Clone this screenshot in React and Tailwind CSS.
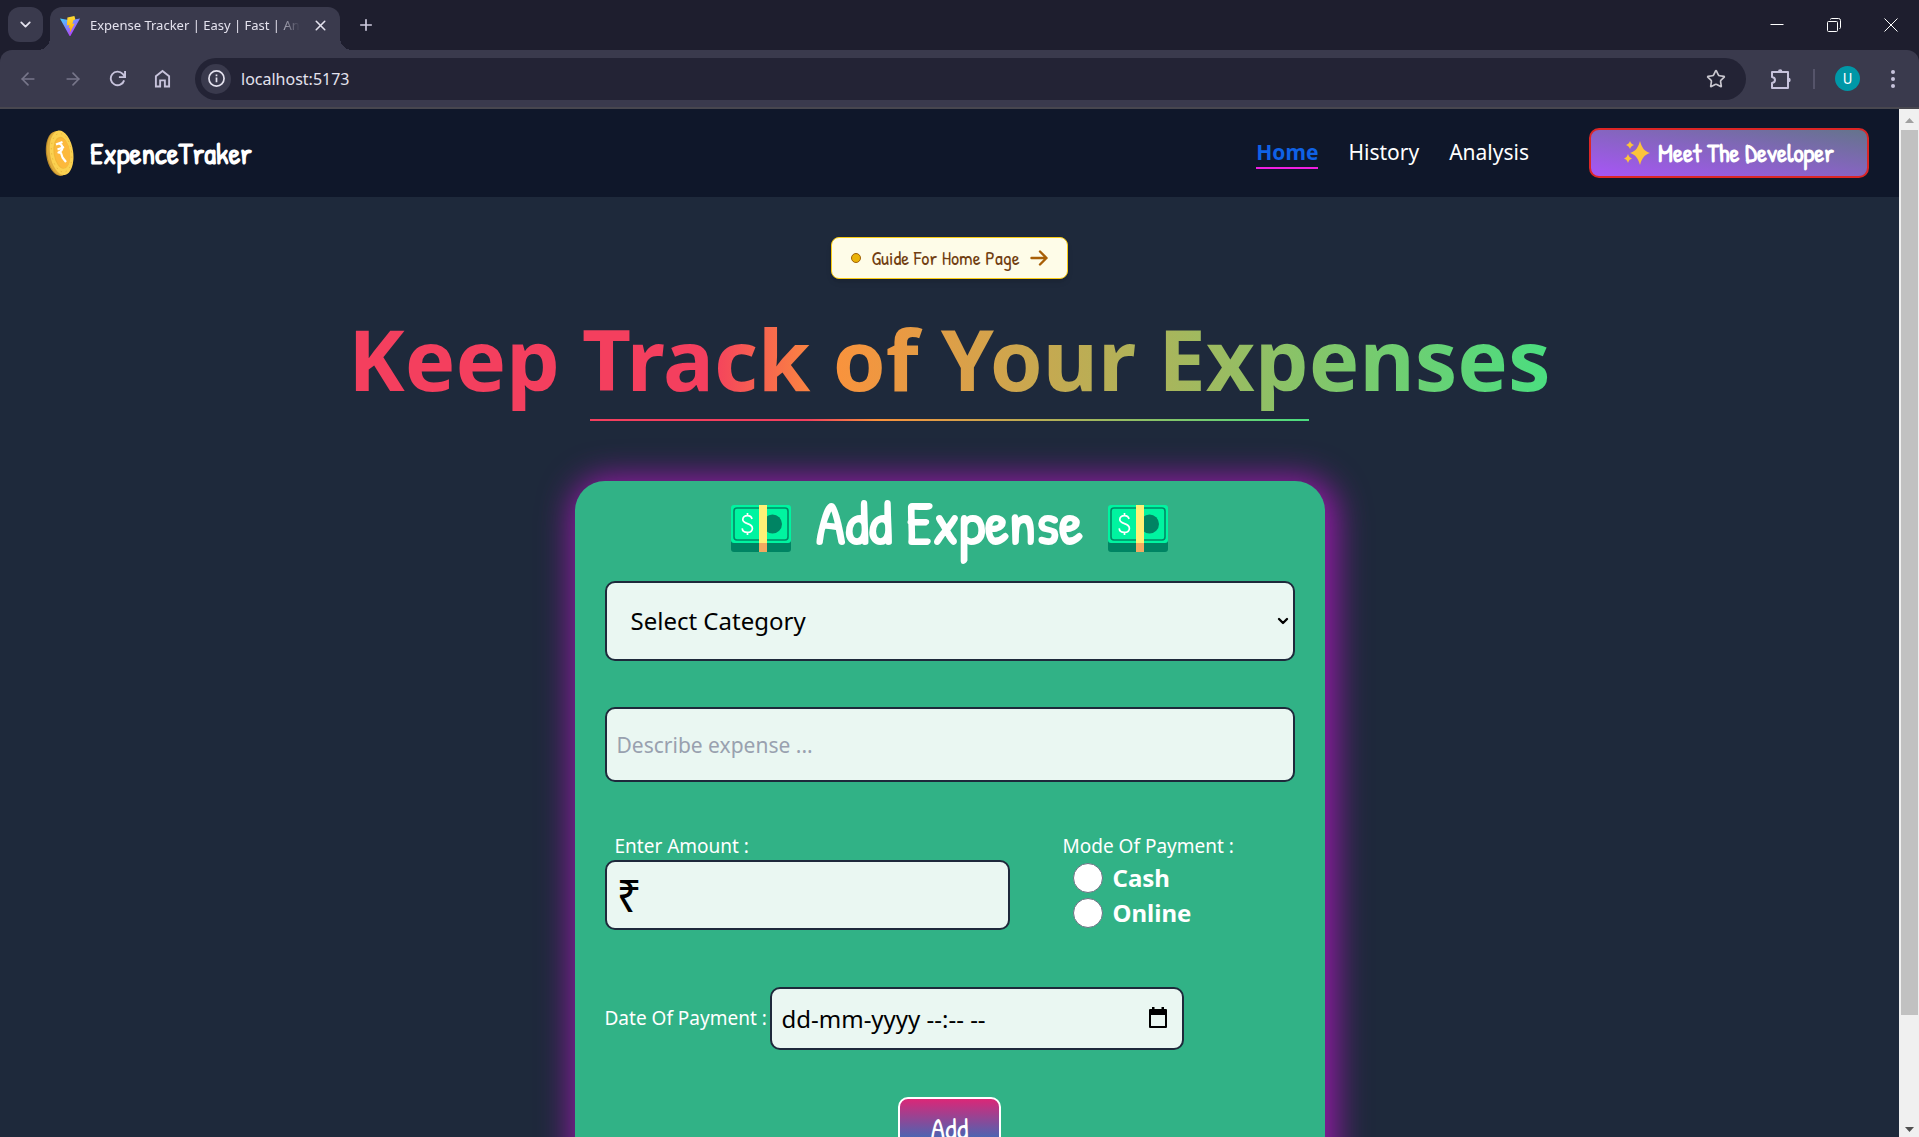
import React from "react";
import { ArrowLeft, ArrowRight, ChevronDown, Plus, X, Star } from "lucide-react";

const hand = "font-['Patrick_Hand','Liberation_Sans_Narrow',sans-serif]";
const field = "rounded-[10px] border-2 border-[#1e293b] bg-[#eaf7f2]";

function ViteLogo() {
  return (
    <svg viewBox="0 0 20 20" className="size-5 shrink-0" aria-hidden="true">
      <defs>
        <linearGradient id="vite-a" x1="0" y1="0" x2="0.7" y2="1">
          <stop offset="0" stopColor="#41d1ff" />
          <stop offset="1" stopColor="#bd34fe" />
        </linearGradient>
        <linearGradient id="vite-b" x1="0" y1="0" x2="0" y2="1">
          <stop offset="0" stopColor="#ffdd35" />
          <stop offset="1" stopColor="#ffa800" />
        </linearGradient>
      </defs>
      <path d="M0 2.6 10 4.2 20 2.6 10.4 20h-.8z" fill="url(#vite-a)" />
      <path d="m14.4 0-7 1.4-.5 8 2.4-.5-.6 3.2 1.6-.4-.6 5.2 5-9.4-2.3.4 1-3.7 2-.6z" fill="url(#vite-b)" />
    </svg>
  );
}

function CoinLogo() {
  return (
    <svg viewBox="0 0 30 48" className="h-12 w-[30px]" aria-hidden="true">
      <g transform="rotate(-8 15 24)">
        <ellipse cx="13" cy="24.4" rx="12" ry="22.4" fill="#b98a2c" />
        <ellipse cx="14.2" cy="24.2" rx="12" ry="22.4" fill="#e0ad3c" />
        <ellipse cx="16.6" cy="24" rx="11.6" ry="22.4" fill="#fbd150" />
        <ellipse cx="16.8" cy="24" rx="8.2" ry="16" fill="#f1b838" />
        <ellipse cx="17.4" cy="24.4" rx="7.6" ry="15" fill="#fcb93c" />
        <ellipse cx="16.6" cy="24" rx="10" ry="19.4" fill="none" stroke="#e2ae38" strokeWidth=".8" strokeDasharray="1.2 4" />
      </g>
      <path d="m11 15.500 6.500-2.500M12.500 20.500l6.500-2.500M14 14.500c4 1 5 6.500-.5 9l2.500.5 1.500 4.500 3.500 4.500" fill="none" stroke="#fff" strokeWidth="2.200" strokeLinejoin="round" />
    </svg>
  );
}

function Sparkles() {
  return (
    <svg viewBox="0 0 26 24" className="h-6 w-[26px]" fill="#fcc43a" aria-hidden="true">
      <path d="M16 0c2 7 4.200 10 10 12-5.800 2-8 5-10 12-2-7-4.200-10-10-12C11.800 10 14 7 16 0z" />
      <path d="M6 0c.9 2.300 1.700 3.200 4 4-2.300.8-3.100 1.700-4 4-.9-2.300-1.700-3.200-4-4 2.300-.8 3.100-1.700 4-4zM4 13c1 2.500 1.800 3.700 4 4.500-2.200.8-3 2-4 4.500-1-2.500-1.800-3.700-4-4.500 2.200-.8 3-2 4-4.500z" />
    </svg>
  );
}

function Cash() {
  return (
    <svg viewBox="0 0 60 47" className="h-[47px] w-[60px]" aria-hidden="true">
      <rect y="8" width="60" height="39" rx="3" fill="#008463" />
      <rect width="60" height="38" rx="3" fill="#00f4a0" />
      <rect x="3" y="3" width="54" height="32" rx="3" fill="none" stroke="#008a66" strokeWidth="1.600" />
      <circle cx="41.500" cy="19" r="9.500" fill="#008463" />
      <path d="M21 14c-.5-2.300-2-3.300-4.500-3.300-2.800 0-4.700 1.400-4.700 3.800 0 5.400 9.600 2.800 9.600 8.700 0 2.600-2 4.200-5 4.200s-5-1.400-5.200-4M16.500 8v3M16.500 27v3" fill="none" stroke="#fff" strokeWidth="1.700" />
      <rect x="28" width="8" height="38" fill="#fff176" />
      <rect x="28" y="38" width="8" height="9" fill="#f4a960" />
    </svg>
  );
}

function IconButton({ label, className = "text-[#c7c3dc]", children }) {
  return (
    <button type="button" aria-label={label} className={`flex size-[45px] shrink-0 items-center justify-center ${className}`}>
      {children}
    </button>
  );
}

function TitleBar() {
  return (
    <div className="flex h-[50px] shrink-0 items-end bg-[#1e1e2e] pl-2 text-[#e4e2ee]">
      <button type="button" aria-label="Search tabs" className="mb-2 flex size-[35px] shrink-0 items-center justify-center rounded-xl bg-[#3a3a4d]">
        <ChevronDown size={17} strokeWidth={2.5} />
      </button>
      <div className="relative ml-[7px] flex h-[43px] w-[290px] shrink-0 items-center gap-2.5 rounded-t-xl bg-[#3a3a4d] pb-1.5 pl-2.5">
        <span className="absolute bottom-0 -left-3 size-3 bg-[radial-gradient(circle_at_top_left,transparent_12px,#3a3a4d_12px)]" />
        <span className="absolute -right-3 bottom-0 size-3 bg-[radial-gradient(circle_at_top_right,transparent_12px,#3a3a4d_12px)]" />
        <ViteLogo />
        <span className="w-[212px] font-['Noto_Sans',sans-serif] text-[13px] whitespace-nowrap [mask-image:linear-gradient(to_right,black_185px,transparent_210px)]">
          Expense Tracker | Easy | Fast | An
        </span>
        <button type="button" aria-label="Close tab" className="flex"><X size={17} strokeWidth={2.2} /></button>
      </div>
      <button type="button" aria-label="New tab" className="mb-4 ml-[17px] flex text-[#cfcce0]"><Plus size={18} strokeWidth={2.2} /></button>
      <div className="ml-auto flex h-full items-center text-white">
        <button type="button" aria-label="Minimize" className="flex h-full w-[57px] items-center justify-center">
          <svg viewBox="0 0 14 14" className="size-3.5" aria-hidden="true"><path d="M.5 6.500h13" stroke="currentColor" /></svg>
        </button>
        <button type="button" aria-label="Restore" className="flex h-full w-[57px] items-center justify-center">
          <svg viewBox="0 0 14 14" className="size-3.5" fill="none" stroke="currentColor" aria-hidden="true">
            <rect x=".5" y="3.500" width="10" height="10" rx="1" /><path d="M3.500 1.500q0-1 1-1h7q2 0 2 2v7q0 1-1 1" />
          </svg>
        </button>
        <button type="button" aria-label="Close" className="flex h-full w-[57px] items-center justify-center">
          <svg viewBox="0 0 14 14" className="size-3.5" aria-hidden="true"><path d="m.5.5 13 13m0-13-13 13" stroke="currentColor" /></svg>
        </button>
      </div>
    </div>
  );
}

function Toolbar() {
  return (
    <div className="shrink-0 bg-[#1e1e2e]">
      <div className="flex h-[59px] items-center rounded-t-xl border-b-2 border-[#48474f] bg-[#3a3a4d] pr-1 pl-[5px]">
        <IconButton label="Back" className="text-[#77768a]"><ArrowLeft size={20} strokeWidth={2} /></IconButton>
        <IconButton label="Forward" className="text-[#77768a]"><ArrowRight size={20} strokeWidth={2} /></IconButton>
        <IconButton label="Reload">
          <svg viewBox="0 0 18 18" className="size-[17px]" fill="none" stroke="currentColor" strokeWidth="2" aria-hidden="true">
            <path d="M16 11A7.200 7.200 0 1 1 14.500 4.200L16.500 6.500M17 1v6.500h-6.500" />
          </svg>
        </IconButton>
        <IconButton label="Home">
          <svg viewBox="0 0 18 20" className="h-[19px] w-[17px]" fill="none" stroke="currentColor" strokeWidth="2" aria-hidden="true">
            <path d="M2 18.500V7.500L9 2l7 5.500v11h-4.500V12h-5v6.500z" />
          </svg>
        </IconButton>
        <div className="ml-[10px] flex h-[42px] flex-1 items-center rounded-full bg-[#232335] pr-5 pl-1.5">
          <button type="button" aria-label="View site information" className="flex size-[30px] items-center justify-center rounded-full bg-[#3a3a4d] text-[#e4e2ee]">
            <svg viewBox="0 0 18 18" className="size-[17px]" fill="none" stroke="currentColor" strokeWidth="1.8" aria-hidden="true">
              <circle cx="9" cy="9" r="8" /><path d="M9 8v5M9 4.800v1.900" />
            </svg>
          </button>
          <input aria-label="Address" defaultValue="localhost:5173" className="ml-2.5 min-w-0 flex-1 bg-transparent font-['Noto_Sans',sans-serif] text-base text-[#e4e2ee] outline-none" />
          <button type="button" aria-label="Bookmark this tab" className="flex text-[#c9c7cf]">
            <Star size={20} strokeWidth={2} strokeLinejoin="miter" />
          </button>
        </div>
        <IconButton label="Extensions" className="ml-3 text-[#c7c3dc]">
          <svg viewBox="0 0 22 22" className="size-[22px]" fill="none" stroke="currentColor" strokeWidth="2" strokeLinejoin="round" aria-hidden="true">
            <path d="M2 4h16v16H2v-5c4-.5 4-5.500 0-6z" />
            <path d="M8 3.500a2.200 2.200 0 0 1 4.400 0zM18.500 9.800a2.200 2.200 0 0 1 0 4.400z" fill="currentColor" stroke="none" />
          </svg>
        </IconButton>
        <span className="mr-2.5 ml-2.5 h-5 w-0.5 bg-[#55546a]" />
        <IconButton label="Profile">
          <span className="flex size-[25px] items-center justify-center rounded-full bg-[#0097a7] font-[Roboto,sans-serif] text-sm text-white">U</span>
        </IconButton>
        <IconButton label="Menu">
          <svg viewBox="0 0 4 18" className="h-[18px] w-1" fill="currentColor" aria-hidden="true">
            <circle cx="2" cy="2" r="2" /><circle cx="2" cy="9" r="2" /><circle cx="2" cy="16" r="2" />
          </svg>
        </IconButton>
      </div>
    </div>
  );
}

function SiteHeader() {
  return (
    <header className="flex h-[88px] items-center bg-[#0f172a] pr-[30px] pl-[45px] text-white">
      <a href="#home" className="flex items-center gap-[15px]">
        <CoinLogo />
        <span className={`${hand} text-[30px] font-bold`}>ExpenceTraker</span>
      </a>
      <nav className="ml-auto flex items-center gap-[30px] text-[21px]">
        <a href="#home" className="border-b-2 border-[#f01fe0] leading-[30px] font-bold text-[#0f62e6]">Home</a>
        <a href="#history">History</a>
        <a href="#analysis">Analysis</a>
      </nav>
      <button type="button" className={`${hand} ml-[60px] flex h-[50px] w-[280px] items-center justify-center gap-2 rounded-[10px] border-2 border-[#dc2626] bg-linear-to-tr/srgb from-[#a855f7] to-[#64748b] text-[25px] leading-none font-bold`}>
        <Sparkles />
        Meet The Developer
      </button>
    </header>
  );
}

function ExpenseForm() {
  return (
    <form className="mt-[60px] w-[750px] rounded-t-[30px] bg-[#31b286] px-[30px] pb-20 text-white shadow-[4px_4px_32px_8px_#941aa6]">
      <h2 className={`${hand} flex h-[100px] items-center justify-center gap-[25px] pb-1.5 text-[60px] leading-none font-bold`}>
        <Cash /><span className="pb-3">Add Expense</span><Cash />
      </h2>
      <div className="relative">
        <select aria-label="Category" className={`${field} h-20 w-full appearance-none pl-6 text-2xl text-black`}>
          <option>Select Category</option>
        </select>
        <ChevronDown size={16} strokeWidth={3.5} className="pointer-events-none absolute top-8 right-1 text-black" />
      </div>
      <input aria-label="Describe expense" placeholder="Describe expense ..." className={`${field} mt-[46px] h-[75px] w-full px-2.5 text-[21px] text-black placeholder:text-gray-400`} />

      <div className="mt-[50px] flex items-start">
        <div className="w-[405px]">
          <label htmlFor="amount" className="block pl-2.5 text-[19px] leading-7">Enter Amount :</label>
          <input id="amount" defaultValue="₹" className={`${field} h-[70px] w-full px-2.5 text-[44px] text-black`} />
        </div>
        <fieldset className="ml-[53px]">
          <legend className="text-[19px] leading-7">Mode Of Payment :</legend>
          {["Cash", "Online"].map((mode) => (
            <label key={mode} className="flex h-[35px] items-center gap-2.5 pl-2.5 text-2xl font-bold">
              <input type="radio" name="mode" className="size-[30px] appearance-none rounded-full border border-gray-500 bg-white" />
              {mode}
            </label>
          ))}
        </fieldset>
      </div>

      <div className="mt-[57px] flex items-center">
        <label htmlFor="date" className="w-[165px] text-[19px] whitespace-nowrap">Date Of Payment :</label>
        <div className="relative w-[414px]">
          <input id="date" placeholder="dd-mm-yyyy --:-- --" className={`${field} h-[63px] w-full px-2.5 text-2xl text-black placeholder:text-black`} />
          <button type="button" aria-label="Pick a date" className="absolute top-5 right-4 text-black">
            <svg viewBox="0 0 20 22" className="h-[22px] w-5" aria-hidden="true">
              <path d="M2 3h16v17H2z" fill="none" stroke="currentColor" strokeWidth="2" strokeLinejoin="round" />
              <path d="M1 3h18v5H1zM4 0h2.500v3H4zM13.500 0H16v3h-2.500z" fill="currentColor" />
            </svg>
          </button>
        </div>
      </div>

      <button type="submit" className={`${hand} mx-auto mt-[47px] flex h-[62px] w-[103px] items-center justify-center rounded-[10px] border-2 border-white bg-linear-to-b/srgb from-[#db2777] to-[#0284d0] text-[30px]`}>
        Add
      </button>
    </form>
  );
}

function Scrollbar() {
  return (
    <div className="flex w-5 shrink-0 flex-col items-center bg-[#f0f0f0]" aria-hidden="true">
      <svg viewBox="0 0 19 21" className="h-[21px] w-[19px]"><path d="M5 14 9.500 9l4.500 5z" fill="#a0a0a0" /></svg>
      <span className="h-[885px] w-[17px] bg-[#c1c1c1]" />
      <svg viewBox="0 0 19 21" className="mt-auto h-[21px] w-[19px]"><path d="m5 11 4.500 5 4.500-5z" fill="#505050" /></svg>
    </div>
  );
}

export default function App() {
  return (
    <div className="flex h-screen flex-col overflow-hidden font-['Segoe_UI','Noto_Sans',sans-serif]">
      <TitleBar />
      <Toolbar />
      <div className="flex min-h-0 flex-1">
        <div className="min-w-0 flex-1 overflow-hidden bg-[#1e293b]">
          <SiteHeader />
          <main className="flex flex-col items-center">
            <button type="button" className={`${hand} mt-10 flex h-[42px] w-[237px] items-center justify-center gap-2.5 rounded-lg border border-[#facc15] bg-[#fefce8] text-xl text-[#713f12] shadow-md`}>
              <span className="size-2.5 rounded-full border border-[#a16207] bg-[#eab308]" />
              Guide For Home Page
              <svg viewBox="0 0 18 16" className="h-4 w-[18px]" fill="none" stroke="#a85f07" strokeWidth="2.4" strokeLinecap="round" strokeLinejoin="round" aria-hidden="true">
                <path d="M1.500 8h15M10 1.500 16.500 8 10 14.500" />
              </svg>
            </button>
            <h1 className="mt-[27px] mb-2 bg-linear-to-r/srgb from-[#f43f5e] from-30% via-[#fb923c] via-40% to-[#4ade80] bg-clip-text text-[85px] leading-[105px] font-bold whitespace-nowrap text-transparent">
              Keep Track of Your Expenses
            </h1>
            <span className="h-0.5 w-[719px] bg-linear-to-r/srgb from-[#f43f5e] from-30% via-[#fb923c] via-40% to-[#4ade80]" />
            <ExpenseForm />
          </main>
        </div>
        <Scrollbar />
      </div>
    </div>
  );
}
